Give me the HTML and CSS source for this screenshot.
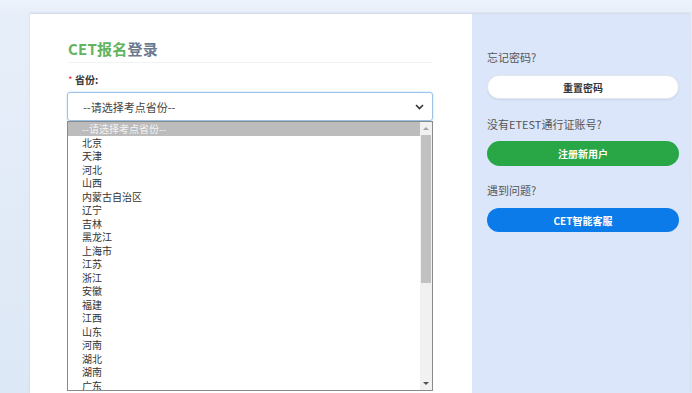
FILE: index.html
```html
<!DOCTYPE html>
<html lang="zh">
<head>
<meta charset="utf-8">
<link rel="stylesheet" href="styles.css">
</head>
<body>
<div class="card">
  <div class="left">
    <h1 class="title"><span class="g">CET报名</span><span class="s">登录</span></h1>
    <div class="rule"></div>
    <div class="label"><span class="req">*</span> 省份:</div>
    <div class="select-wrap">
      <div class="select">
        <span>--请选择考点省份--</span>
        <svg class="chev" width="9" height="6" viewBox="0 0 9 6"><path d="M1 1 L4.5 4.5 L8 1" fill="none" stroke="#333" stroke-width="1.6"/></svg>
      </div>
      <div class="dropdown">
        <ul class="opts">
          <li class="sel">--请选择考点省份--</li>
          <li>北京</li><li>天津</li><li>河北</li><li>山西</li><li>内蒙古自治区</li>
          <li>辽宁</li><li>吉林</li><li>黑龙江</li><li>上海市</li><li>江苏</li>
          <li>浙江</li><li>安徽</li><li>福建</li><li>江西</li><li>山东</li>
          <li>河南</li><li>湖北</li><li>湖南</li><li>广东</li>
        </ul>
        <div class="sb">
          <div class="arr up"></div>
          <div class="track"><div class="thumb"></div></div>
          <div class="arr down"></div>
        </div>
      </div>
    </div>
  </div>
  <div class="right">
    <p class="q">忘记密码?</p>
    <button class="btn white">重置密码</button>
    <p class="q">没有ETEST通行证账号?</p>
    <button class="btn green">注册新用户</button>
    <p class="q">遇到问题?</p>
    <button class="btn blue">CET智能客服</button>
  </div>
</div>
</body>
</html>
```
FILE: styles.css
```css
* { box-sizing: border-box; }
html, body { margin: 0; height: 100%; overflow: hidden; }
body {
  font-family: "Noto Sans CJK SC", "Liberation Sans", sans-serif;
  background: linear-gradient(180deg, #eef3fb 0px, #e6eef9 14px, #dde8f6 100%);
  padding: 14px 2px 0 30px;
}
.card {
  display: flex;
  height: 379px;
  width: 660px;
  background: #fff;
  box-shadow: 0 -1px 2px rgba(120,140,170,0.25);
}
.left {
  width: 442px;
  padding: 24px 0 0 38px;
  position: relative;
}
.title {
  margin: 0;
  font-size: 15px;
  font-weight: bold;
  line-height: 22px;
  letter-spacing: 0.2px;
}
.title .g { color: #62b35b; }
.title .s { color: #6b7a8e; }
.rule {
  height: 1px;
  width: 364px;
  background: #f1f3f5;
  margin-top: 2px;
}
.label {
  margin-top: 10px;
  font-size: 10px;
  font-weight: bold;
  color: #333;
  line-height: 14px;
}
.req { color: #e0413a; font-weight: normal; }
.select-wrap {
  position: relative;
  margin-top: 5px;
  margin-left: -1px;
  width: 366px;
}
.select {
  height: 29px;
  border: 1px solid #9cc3e6;
  border-radius: 3px;
  box-shadow: 0 0 2px rgba(102,175,233,0.5);
  display: flex;
  align-items: center;
  justify-content: space-between;
  padding: 0 8px 0 15px;
  font-size: 11px;
  color: #444;
}
.chev { margin-top: 1px; }
.dropdown {
  position: absolute;
  left: 0;
  top: 29px;
  width: 366px;
  height: 270px;
  background: #fff;
  border: 1px solid #8a8a8a;
  display: flex;
}
.opts {
  list-style: none;
  margin: 0;
  padding: 0;
  flex: 1;
  overflow: hidden;
}
.opts li {
  height: 13.5px;
  line-height: 13.5px;
  font-size: 10px;
  color: #333;
  padding-left: 14px;
  white-space: nowrap;
}
.opts li.sel { background: #bcbcbc; color: #f4f4f4; }
.sb {
  width: 12px;
  background: #f1f1f1;
  display: flex;
  flex-direction: column;
}
.arr { height: 13px; display: flex; align-items: center; justify-content: center; }
.arr::before {
  content: "";
  width: 0; height: 0;
  border-left: 3px solid transparent;
  border-right: 3px solid transparent;
}
.arr.up::before { border-bottom: 3px solid #a3a3a3; }
.arr.down::before { border-top: 3px solid #505050; }
.track { flex: 1; padding: 0 1px; }
.thumb { height: 148px; background: #c1c1c1; }
.right {
  flex: 1;
  background: #dce6fb;
  padding: 36px 11px 0 15px;
  display: flex;
  flex-direction: column;
}
.q {
  margin: 0;
  font-size: 11px;
  line-height: 14px;
  color: #555;
}
.btn {
  font-family: inherit;
  font-size: 10px;
  font-weight: bold;
  border-radius: 13px;
  border: 1px solid transparent;
  width: 100%;
  cursor: pointer;
  padding: 0;
}
.btn.white {
  height: 24px;
  margin: 11px 0 18px;
  background: #fff;
  border-color: #e2e6ee;
  color: #333;
  box-shadow: 0 1px 2px rgba(0,0,0,0.08);
}
.btn.green {
  height: 25px;
  margin: 10px 0 17px;
  background: #29a646;
  color: #fff;
}
.btn.blue {
  height: 24px;
  margin: 11px 0 0;
  background: #0b7be9;
  color: #fff;
}
```
